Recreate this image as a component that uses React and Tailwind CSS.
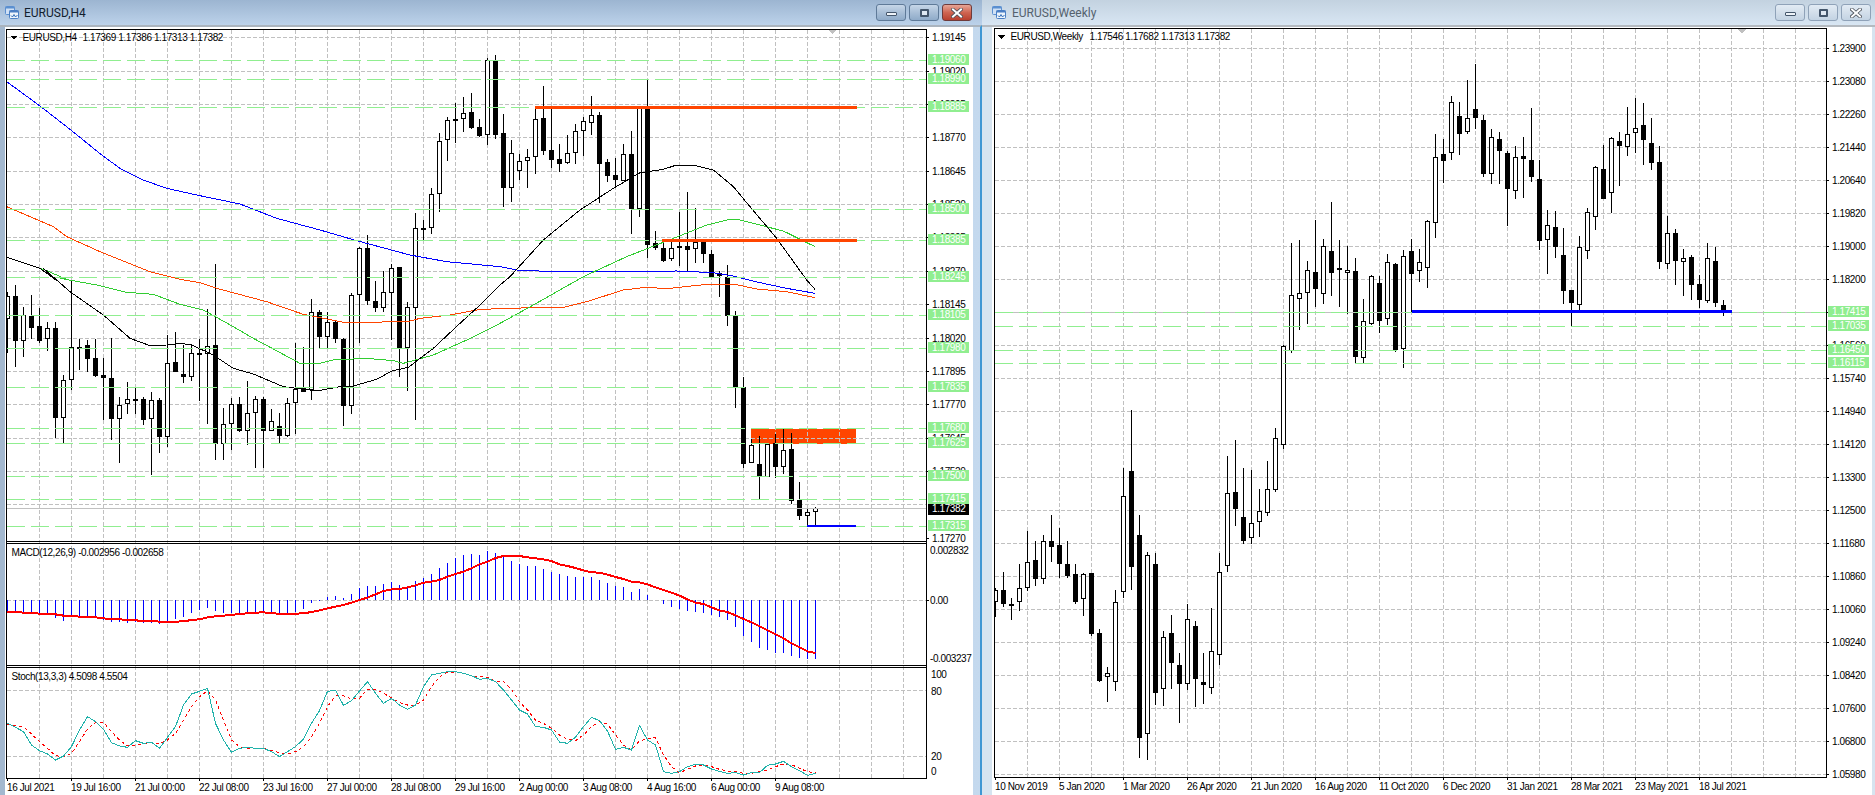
import React from 'react';

// all chart coordinates are screen pixels, read off the screenshot
// candle rows: [high, low, bodyTop, bodyBottom, white?] in 3x zoom units
const h4A = [
  [95,280,108,178,1],[75,320,108,242,0],[140,290,165,242,1],[105,238,167,204,0],[145,250,198,243,0],[187,272,205,238,1],
  [187,533,205,473,0],[345,548,361,473,1],[62,390,262,361,1],[238,330,260,265,1],[240,335,256,296,0],[237,352,295,347,0],
  [295,480,345,353,0],[235,540,355,476,0],[410,610,436,478,1],[367,463,418,433,1],[384,462,418,422,0],[412,494,418,480,0],
  [397,645,421,478,1],[414,578,420,530,0],[226,560,310,530,1],[216,335,306,335,0],[255,368,343,351,0],[255,362,280,350,1],
  [237,424,280,285,0],[148,492,257,283,1],[12,600,256,553,0],[445,600,493,553,1],[415,570,433,493,1],[410,517,433,514,0],
  [363,555,460,512,1],[408,623,418,460,1],[410,623,418,512,0],[447,512,484,512,1],[458,550,499,527,0],[415,532,430,527,1],
  [250,522,386,428,1],[262,395,385,395,0],[118,420,157,390,1],[150,265,157,230,0],[155,265,187,230,1],[180,248,187,238,0],
  [235,497,238,437,0],[100,462,106,437,1],
];
const h4B = [
  [740,1030,745,886,1],[705,915,745,902,0],[842,935,904,923,0],[812,935,877,923,1],[793,1020,805,878,1],[800,1130,801,1045,0],
  [907,1172,920,1045,1],[640,1260,685,923,1],[660,720,685,690,0],[565,702,583,685,1],[400,635,424,583,1],[352,482,361,421,1],
  [308,428,357,362,0],[292,395,340,358,1],[280,388,337,383,0],[358,412,382,407,0],[175,435,181,406,1],[165,417,183,405,0],
  [342,622,400,563,0],[420,605,460,565,1],[462,540,484,514,1],[447,563,472,482,1],[328,522,358,472,1],[258,465,354,452,0],
  [328,505,450,480,0],[432,515,478,491,0],[405,492,460,488,1],[372,492,394,460,1],[352,468,364,392,1],[288,405,346,368,1],
  [337,608,345,491,0],[478,545,487,527,0],[475,560,525,540,0],[432,542,463,542,1],[393,702,463,628,0],[322,650,325,628,1],
  [238,775,325,734,0],[693,750,730,745,0],[725,785,745,782,0],[725,782,745,778,1],[636,797,738,745,1],[576,812,738,749,0],
  [625,790,725,748,1],[720,790,720,763,0],[750,832,763,830,0],
];
const h4C = [
  [32,110,40,47,0],[15,197,52,167,0],[153,445,167,381,0],[350,625,382,612,0],[538,610,556,608,1],[528,717,612,652,0],
  [548,650,552,650,1],[522,655,550,620,0],[507,642,571,620,1],[520,733,567,722,0],[667,780,719,768,0],[747,797,757,767,1],
  [740,797,744,755,1],
];
const wkA = [
  [580,665,586,622,1],[532,635,586,627,0],[610,675,627,629,0],[507,648,580,622,1],[408,588,502,580,1],[438,573,496,551,0],
  [420,567,439,553,1],[360,500,438,455,0],[399,548,450,506,0],[438,548,507,542,0],[507,627,537,620,0],[533,662,538,613,1],
  [535,722,535,716,0],[702,860,715,857,0],[817,920,835,845,1],[585,887,620,862,1],[218,608,304,592,1],[45,585,228,515,0],
  [360,1090,420,1028,0],[472,1095,481,1018,1],[475,930,508,893,0],[708,932,727,883,1],[660,882,714,803,0],[775,983,811,866,0],
  [627,885,673,868,1],[678,935,693,851,0],[773,927,861,870,0],[640,896,769,880,1],[474,810,532,781,1],[183,530,295,514,1],
  [135,392,292,341,0],[220,447,367,437,0],[225,446,385,428,1],[282,426,349,382,1],[198,362,283,355,1],[99,290,130,284,1],
  [-150,162,-147,151,1],
];
const wkB = [
  [730,1058,886,1052,1],[720,990,880,898,1],[783,972,811,878,1],[660,920,816,867,0],[717,912,737,881,1],[606,888,753,818,0],
  [720,920,804,809,0],[738,942,811,820,1],[773,1088,813,1070,0],[897,1088,964,1075,1],[825,975,829,971,1],[828,998,850,962,0],
  [762,975,787,958,1],[790,1055,792,1050,0],[750,1103,769,1048,1],[717,935,753,821,0],[747,845,787,814,1],[660,863,664,805,1],
  [402,713,472,670,1],[417,548,462,482,0],[288,480,307,458,1],[305,464,348,401,0],[240,402,355,395,1],[192,386,328,355,0],
  [345,530,361,521,0],[387,553,412,521,1],[396,552,418,452,0],[452,678,460,566,0],[438,596,472,574,1],[411,593,468,476,0],
  [324,545,481,530,0],[480,750,538,722,0],[630,822,676,721,1],[633,773,682,740,0],[684,912,766,872,0],[870,978,871,908,0],
  [708,930,742,916,1],[625,777,637,754,1],[498,690,502,652,1],[436,598,508,596,0],[412,638,415,580,1],[396,557,424,437,0],
  [322,468,403,442,1],[294,458,385,400,1],[310,495,376,419,0],[354,510,430,488,0],[438,806,487,785,0],[648,806,700,793,1],
  [688,855,700,782,0],[748,888,773,787,1],[765,900,772,854,0],[825,924,853,899,0],[730,908,775,902,1],[740,920,784,908,0],
  [900,948,916,932,0],
];

const conv = (rows, base) => rows.map(r => [base + r[0] / 3, base + r[1] / 3, base + r[2] / 3, base + r[3] / 3, r[4]]);
const h4Candles = [...conv(h4A, 260), ...conv(h4B, 0), ...conv(h4C, 260)];
const wkCandles = [...conv(wkA, 395), ...conv(wkB, 0)];

const macdBars = [245,250,245,245,250,250,265,272,262,258,260,265,270,275,275,278,277,278,278,282,272,268,262,248,240,233,242,248,250,250,248,245,250,250,252,250,245,237,219,212,200,198,205,192,173,168,168,162,156,165,172,153,145,132,114,100,84,74,72,75,63,70,
  82,93,102,107,108,117,126,132,138,141,141,141,150,159,168,171,186,177,195,210,221,230,236,242,246,248,255,261,270,291,318,336,354,360,370,369,378,384,387,387];
const macdLine = [245,246,248,248,251,251,253,257,257,260,260,262,265,268,268,270,271,273,273,275,275,275,274,270,268,262,259,257,255,252,250,248,247,250,251,251,251,250,246,241,235,230,225,218,210,203,193,183,178,177,172,166,158,155,150,140,132,125,115,103,95,84,
  78,77,78,82,85,88,93,103,108,114,121,127,128,134,141,147,155,157,163,172,180,188,197,208,218,222,232,241,246,256,267,277,289,301,313,325,340,352,364,369];
const stochMain = [580,592,605,645,662,672,690,678,650,600,560,575,598,638,648,652,632,640,637,655,622,590,525,492,484,475,580,630,667,655,652,655,655,665,680,665,650,627,580,542,484,481,526,512,483,455,490,520,505,525,538,525,470,435,430,425,425,430,437,448,445,455,
  480,510,540,552,590,592,600,636,640,622,590,562,572,603,658,652,660,587,630,645,725,730,725,710,703,705,717,724,730,728,735,728,728,706,702,694,710,722,736,730];
const stochSignal = [583,588,590,612,635,655,677,680,670,635,597,578,577,605,630,648,646,642,638,642,630,610,570,530,500,482,510,570,630,650,655,655,655,662,668,672,665,650,620,580,530,498,497,507,505,478,478,490,503,518,525,525,510,470,440,427,427,430,437,440,442,455,
  455,478,515,540,570,580,595,615,628,632,615,590,575,582,615,645,660,632,627,623,675,710,728,718,708,705,710,718,723,724,730,730,725,720,710,702,704,715,725,728];

const pts = (bx, by, list) => list.map(([x, y]) => `${bx + x / 3},${by + y / 3}`).join(' ');
const maBlue = pts(0, 0, [[20,245],[120,318],[215,392],[305,465],[360,505],[430,540],[500,565],[590,585],[720,612],[830,655],[960,690],[1070,722],[1230,765],[1340,785],[1500,800]]) + ' ' +
  pts(500, 260, [[50,30],[160,35],[300,35],[530,33],[640,38],[700,48],[780,68],[860,85],[945,100]]);
const maOrange = pts(0, 0, [[20,620],[160,680],[200,710],[300,755],[400,795],[450,815],[540,838]]) + ' ' +
  pts(0, 260, [[600,68],[650,85],[800,125],[910,163],[1030,187],[1120,187],[1230,183],[1260,175],[1350,165],[1430,150],[1500,145]]) + ' ' +
  pts(500, 260, [[190,142],[260,125],[370,90],[430,83],[510,85],[630,72],[700,72],[770,87],[860,95],[945,113]]);
const maBlack = pts(0, 0, [[20,772],[120,805],[165,838]]) + ' ' +
  pts(0, 260, [[130,25],[210,95],[310,165],[390,235],[450,257],[500,255],[540,250],[575,255],[640,285],[700,325],[760,342],[850,380],[930,390],[965,390],[1020,380],[1060,378],[1130,358],[1175,333],[1225,322],[1300,265],[1380,190],[1440,135],[1500,75]]) + ' ' +
  pts(500, 0, [[30,830],[130,720],[240,630],[340,565],[420,518],[490,508],[530,495],[590,498],[640,510],[700,560],[750,620],[830,715],[920,840]]) + ' ' +
  pts(500, 260, [[945,88]]);
const maGreen = pts(0, 0, [[20,772],[140,812],[200,838]]) + ' ' +
  pts(0, 260, [[180,55],[290,75],[380,97],[460,103],[540,133],[610,150],[700,200],[760,235],[900,310],[960,310],[1000,300],[1100,295],[1180,302],[1210,310],[1300,285],[1400,240],[1500,190]]) + ' ' +
  pts(500, 260, [[100,135],[250,50]]) + ' ' +
  pts(500, 0, [[380,770],[520,715],[620,675],[690,658],[720,660],[850,693],[945,740]]);

const h4Grid = [37,71,104,137,171,204,237,271,304,338,371,404,438,471,504];
const h4Axis = [[37,'1.19145'],[71,'1.19020'],[104,'1.18895'],[137,'1.18770'],[171,'1.18645'],[204,'1.18520'],[237,'1.18395'],[271,'1.18270'],[304,'1.18145'],[338,'1.18020'],[371,'1.17895'],[404,'1.17770'],[438,'1.17645'],[471,'1.17520'],[538,'1.17270']];
const h4Levels = [[60,'1.19060'],[79,'1.18990'],[107,'1.18885'],[209,'1.18500'],[240,'1.18385'],[277,'1.18245'],[315,'1.18105'],[348,'1.17980'],[387,'1.17835'],[428,'1.17680'],[443,'1.17625'],[476,'1.17500'],[499,'1.17415'],[526,'1.17315']];
const h4Times = [[7,'16 Jul 2021'],[71,'19 Jul 16:00'],[135,'21 Jul 00:00'],[199,'22 Jul 08:00'],[263,'23 Jul 16:00'],[327,'27 Jul 00:00'],[391,'28 Jul 08:00'],[455,'29 Jul 16:00'],[519,'2 Aug 00:00'],[583,'3 Aug 08:00'],[647,'4 Aug 16:00'],[711,'6 Aug 00:00'],[775,'9 Aug 08:00']];

const wkAxisLabels = ['1.23900','1.23080','1.22260','1.21440','1.20640','1.19820','1.19000','1.18200','1.17380','1.16560','1.15740','1.14940','1.14120','1.13300','1.12500','1.11680','1.10860','1.10060','1.09240','1.08420','1.07600','1.06800','1.05980'];
const wkAxis = wkAxisLabels.map((t, i) => [48 + 33 * i, t]);
const wkLevels = [[312,'1.17415'],[326,'1.17035'],[350,'1.16450'],[363,'1.16115']];
const wkTimes = [[995,'10 Nov 2019'],[1059,'5 Jan 2020'],[1123,'1 Mar 2020'],[1187,'26 Apr 2020'],[1251,'21 Jun 2020'],[1315,'16 Aug 2020'],[1379,'11 Oct 2020'],[1443,'6 Dec 2020'],[1507,'31 Jan 2021'],[1571,'28 Mar 2021'],[1635,'23 May 2021'],[1699,'18 Jul 2021']];

const GRID = '#c0c0c0';
const LEVEL = '#90ee90';

function Candles({ data, x0 }) {
  return data.map((c, i) => {
    const x = Math.floor(x0 + 8 * i);
    const hi = Math.round(c[0]), lo = Math.round(c[1]), top = Math.round(c[2]), bot = Math.round(c[3]);
    return (
      <g key={i}>
        <rect x={x} y={hi} width={1} height={Math.max(lo - hi, 1)} fill="#000" />
        {c[4]
          ? <rect x={x - 2 + 0.5} y={top + 0.5} width={4} height={Math.max(bot - top - 1, 1)} fill="#fff" stroke="#000" />
          : <rect x={x - 2} y={top} width={5} height={Math.max(bot - top, 2)} fill="#000" />}
      </g>
    );
  });
}

function VGrid({ xs, y1, y2 }) {
  return xs.map(x => <line key={x} x1={x + 0.5} x2={x + 0.5} y1={y1} y2={y2} stroke={GRID} strokeDasharray="4 2" />);
}

function HGrid({ ys, x1, x2 }) {
  return ys.map(y => <line key={y} x1={x1} x2={x2} y1={y + 0.5} y2={y + 0.5} stroke={GRID} strokeDasharray="4 2" />);
}

function Levels({ ys, x1, x2 }) {
  return ys.map(y => <line key={y} x1={x1} x2={x2} y1={y + 0.5} y2={y + 0.5} stroke={LEVEL} strokeDasharray="18 6" />);
}

function PriceAxis({ rows, x }) {
  return rows.map(([y, t]) => (
    <g key={t}>
      <rect x={x} y={y} width={3} height={1} fill="#000" />
      <text x={x + 6} y={y + 4} fill="#000">{t}</text>
    </g>
  ));
}

function Badges({ rows, x }) {
  return rows.map(([y, t]) => (
    <g key={t}>
      <rect x={x + 2} y={y - 6} width={41} height={11} fill={LEVEL} />
      <text x={x + 6} y={y + 3} fill="#fff">{t}</text>
    </g>
  ));
}

function TimeAxis({ rows, y }) {
  return rows.map(([x, t]) => (
    <g key={t}>
      <rect x={x} y={y} width={1} height={3} fill="#000" />
      <text x={x} y={y + 13} fill="#000">{t}</text>
    </g>
  ));
}

function H4Chart() {
  const xs = Array.from({ length: 28 }, (_, i) => 39 + 32 * i);
  const cx = i => 7.5 + 8 * i;
  return (
    <svg viewBox="5 27 968 768" width={968} height={768} shapeRendering="crispEdges" className="block text-[10px] tracking-[-0.4px]">
      <defs>
        <clipPath id="h4-main"><rect x={7} y={30} width={919} height={511} /></clipPath>
      </defs>
      <g clipPath="url(#h4-main)">
        <rect x={751} y={429} width={105} height={15} fill="#ff4500" />
        <HGrid ys={h4Grid} x1={7} x2={926} />
      </g>
      <VGrid xs={xs} y1={30} y2={778} />
      <HGrid ys={[600, 690, 756]} x1={7} x2={926} />
      <g clipPath="url(#h4-main)">
        <Candles data={h4Candles} x0={7.33} />
        <polyline points={maBlue} fill="none" stroke="#0000ff" />
        <polyline points={maOrange} fill="none" stroke="#ff4500" />
        <polyline points={maGreen} fill="none" stroke="#32cd32" />
        <polyline points={maBlack} fill="none" stroke="#000" />
        <line x1={7} x2={926} y1={508.5} y2={508.5} stroke={GRID} />
        <Levels ys={h4Levels.map(r => r[0])} x1={7} x2={926} />
        <rect x={535} y={106} width={322} height={3} fill="#ff4500" />
        <rect x={662} y={239} width={195} height={3} fill="#ff4500" />
        <rect x={807} y={525} width={49} height={2} fill="#0000ff" />
        <polygon points="828,30 837,30 832.5,34" fill={GRID} />
      </g>
      <polygon points="10,36 17,36 13.5,39.5" fill="#000" />
      <text x={22.5} y={41} fill="#000">EURUSD,H4</text>
      <text x={82.5} y={41} fill="#000">1.17369 1.17386 1.17313 1.17382</text>

      {macdBars.map((v, i) => {
        const y = 530 + v / 3;
        return <line key={i} x1={cx(i)} x2={cx(i)} y1={600} y2={y} stroke="#0000ff" />;
      })}
      <polyline points={macdLine.map((v, i) => `${cx(i)},${530 + v / 3}`).join(' ')} fill="none" stroke="#ff0000" strokeWidth={2} />
      <text x={11.5} y={556} fill="#000">MACD(12,26,9) -0.002956 -0.002658</text>

      <polyline points={stochSignal.map((v, i) => `${cx(i)},${530 + v / 3}`).join(' ')} fill="none" stroke="#ff0000" strokeDasharray="3 3" />
      <polyline points={stochMain.map((v, i) => `${cx(i)},${530 + v / 3}`).join(' ')} fill="none" stroke="#20b2aa" />
      <text x={11.5} y={680} fill="#000">Stoch(13,3,3) 4.5098 4.5504</text>

      <rect x={6} y={29} width={921} height={1} fill="#000" />
      <rect x={6} y={29} width={1} height={750} fill="#000" />
      <rect x={926} y={29} width={1} height={750} fill="#000" />
      <rect x={6} y={541} width={921} height={1} fill="#000" />
      <rect x={6} y={543} width={921} height={1} fill="#000" />
      <rect x={6} y={665} width={921} height={1} fill="#000" />
      <rect x={6} y={667} width={921} height={1} fill="#000" />
      <rect x={6} y={778} width={921} height={1} fill="#000" />

      <PriceAxis rows={h4Axis} x={926} />
      <rect x={926} y={600} width={3} height={1} fill="#000" />
      <text x={930} y={554} fill="#000">0.002832</text>
      <text x={930} y={604} fill="#000">0.00</text>
      <text x={930} y={662} fill="#000">-0.003237</text>
      <text x={931} y={678} fill="#000">100</text>
      <text x={931} y={695} fill="#000">80</text>
      <text x={931} y={760} fill="#000">20</text>
      <text x={931} y={775} fill="#000">0</text>
      <rect x={928} y={504} width={41} height={11} fill="#000" />
      <text x={932} y={512} fill="#fff">1.17382</text>
      <Badges rows={h4Levels} x={926} />
      <TimeAxis rows={h4Times} y={778} />
    </svg>
  );
}

function WeeklyChart() {
  const xs = Array.from({ length: 25 }, (_, i) => 1027 + 32 * i);
  return (
    <svg viewBox="992 27 880 768" width={880} height={768} shapeRendering="crispEdges" className="block text-[10px] tracking-[-0.4px]">
      <defs>
        <clipPath id="wk-main"><rect x={995} y={29} width={831} height={748} /></clipPath>
      </defs>
      <VGrid xs={xs} y1={29} y2={777} />
      <HGrid ys={wkAxis.map(r => r[0])} x1={995} x2={1826} />
      <g clipPath="url(#wk-main)">
        <Candles data={wkCandles} x0={995.33} />
        <line x1={995} x2={1826} y1={312.5} y2={312.5} stroke={GRID} />
        <Levels ys={wkLevels.map(r => r[0])} x1={995} x2={1826} />
        <rect x={1412} y={310} width={320} height={3} fill="#0000ff" />
        <polygon points="1737,29 1747,29 1742,33" fill={GRID} />
      </g>
      <polygon points="998,35 1005,35 1001.5,39" fill="#000" />
      <text x={1010.5} y={40} fill="#000">EURUSD,Weekly</text>
      <text x={1089.5} y={40} fill="#000">1.17546 1.17682 1.17313 1.17382</text>

      <rect x={994} y={28} width={833} height={1} fill="#000" />
      <rect x={994} y={28} width={1} height={750} fill="#000" />
      <rect x={1826} y={28} width={1} height={750} fill="#000" />
      <rect x={994} y={777} width={833} height={1} fill="#000" />

      <PriceAxis rows={wkAxis} x={1826} />
      <rect x={1828} y={306} width={41} height={11} fill="#000" />
      <Badges rows={wkLevels} x={1826} />
      <TimeAxis rows={wkTimes} y={777} />
    </svg>
  );
}

function WindowIcon() {
  return (
    <svg viewBox="0 0 14 13" className="w-[14px] h-[13px] shrink-0">
      <rect x="0.5" y="0.5" width="9" height="8" rx="1" fill="#cfe0f5" stroke="#5b8fd0" />
      <rect x="0.5" y="0.5" width="9" height="2" fill="#5b8fd0" />
      <rect x="4.5" y="4.5" width="9" height="8" rx="1" fill="#eef5fc" stroke="#4a7fc4" />
      <rect x="4.5" y="4.5" width="9" height="2" fill="#4a7fc4" />
      <path d="M6 9.5 L7.5 11 L9 8.5 L10.5 11 L12.5 9" fill="none" stroke="#2f6bb8" strokeWidth="1" />
    </svg>
  );
}

function CaptionButtons({ active }) {
  const base = 'w-[30px] h-[17px] rounded-[3px] border flex items-center justify-center bg-linear-to-b';
  const plain = active
    ? 'border-[#5f7a98] from-[#c6d6e8] via-[#a9bfd7] to-[#8fabc9]'
    : 'border-[#8fa2b8] from-[#e2ebf4] via-[#d3dfeb] to-[#c3d3e3]';
  const close = active
    ? 'border-[#6e3b3b] from-[#e6a596] via-[#cf6552] to-[#b8402f]'
    : plain;
  return (
    <div className="ml-auto flex gap-[3px]">
      <div className={`${base} ${plain}`}>
        <div className="w-[11px] h-[4px] mt-[3px] rounded-[1px] bg-[#eef3f8] border border-[#44566b]" />
      </div>
      <div className={`${base} ${plain}`}>
        <div className="w-[9px] h-[8px] bg-[#dfe8f2] border-2 border-[#44566b] rounded-[1px]" />
      </div>
      <div className={`${base} ${close}`}>
        <svg viewBox="0 0 12 10" className="w-[12px] h-[10px]">
          <path d="M2 1.5 L10 8.5 M10 1.5 L2 8.5" stroke="#4a4f58" strokeWidth="3.6" strokeLinecap="square" />
          <path d="M2 1.5 L10 8.5 M10 1.5 L2 8.5" stroke="#fff" strokeWidth="2" strokeLinecap="square" />
        </svg>
      </div>
    </div>
  );
}

export default function App() {
  return (
    <div className="flex w-[1875px] h-[795px] overflow-hidden font-['Liberation_Sans',sans-serif]">
      <div className="w-[982px] shrink-0 flex flex-col bg-[#a9c4df]">
        <div className="h-[25px] flex items-center gap-[5px] pl-[5px] pr-[10px] bg-linear-to-b from-[#9cb5d1] to-[#bcd2ea]">
          <WindowIcon />
          <span className="text-[12px] text-[#12202e] font-['Roboto',sans-serif]">EURUSD,H4</span>
          <CaptionButtons active />
        </div>
        <div className="flex-1 flex border-t-2 border-[#aab4be] pl-[5px] pr-[7px] border-r-2 border-r-[#3f97d3] bg-linear-to-r from-[#a3b8cf] to-[#c4d9ee]">
          <div className="bg-white">
            <H4Chart />
          </div>
        </div>
      </div>
      <div className="flex-1 flex flex-col bg-[#d6e4f0]">
        <div className="h-[25px] flex items-center gap-[6px] pl-[10px] pr-[4px] bg-linear-to-b from-[#c3d2e0] to-[#d8e6f3]">
          <WindowIcon />
          <span className="text-[12px] text-[#55626e] font-['Roboto',sans-serif]">EURUSD,Weekly</span>
          <CaptionButtons />
        </div>
        <div className="flex-1 flex border-t-2 border-[#b4bac0] pl-[10px] pr-[3px]">
          <div className="bg-white">
            <WeeklyChart />
          </div>
        </div>
      </div>
    </div>
  );
}
